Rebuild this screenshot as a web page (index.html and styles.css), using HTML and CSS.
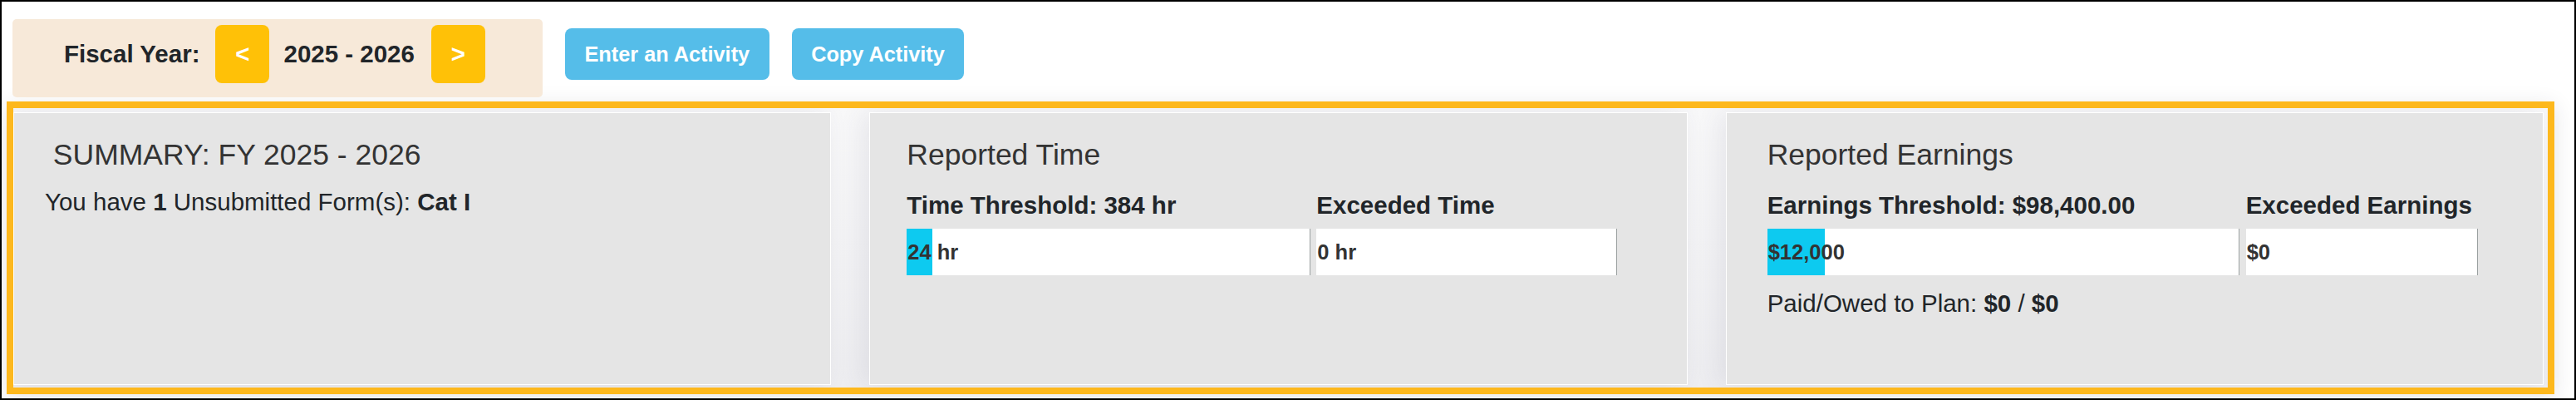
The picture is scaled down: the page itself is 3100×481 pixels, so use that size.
FILE: index.html
```html
<!DOCTYPE html>
<html lang="en">
<head>
<meta charset="utf-8">
<title>Activity Summary</title>
<link rel="stylesheet" href="styles.css">
</head>
<body>
<div class="frame">
  <div class="toolbar">
    <div class="fy">
      <span class="fy-label">Fiscal Year:</span>
      <button class="btn-nav" type="button">&lt;</button>
      <span class="fy-value">2025 - 2026</span>
      <button class="btn-nav" type="button">&gt;</button>
    </div>
    <button class="btn-info" type="button">Enter an Activity</button>
    <button class="btn-info" type="button">Copy Activity</button>
  </div>
  <div class="board">
    <div class="card card-summary">
      <h5 class="card-title">&nbsp;SUMMARY: FY 2025 - 2026</h5>
      <p class="body-text">You have <b>1</b> Unsubmitted Form(s): <b>Cat I</b></p>
    </div>
    <div class="card card-time">
      <h5 class="card-title">Reported Time</h5>
      <div class="metrics metrics-time">
        <div class="metric-head">Time Threshold: 384 hr</div>
        <div class="metric-head">Exceeded Time</div>
        <div class="bar"><div class="fill" style="width: 6.25%">24 hr</div></div>
        <div class="bar"><span class="bar-text">0 hr</span></div>
      </div>
    </div>
    <div class="card card-earn">
      <h5 class="card-title">Reported Earnings</h5>
      <div class="metrics metrics-earn">
        <div class="metric-head">Earnings Threshold: $98,400.00</div>
        <div class="metric-head">Exceeded Earnings</div>
        <div class="bar"><div class="fill" style="width: 12.2%">$12,000</div></div>
        <div class="bar"><span class="bar-text">$0</span></div>
      </div>
      <p class="body-text paid">Paid/Owed to Plan: <b>$0</b> / <b>$0</b></p>
    </div>
  </div>
</div>
</body>
</html>
```

FILE: styles.css
```css
html, body {
  margin: 0;
  padding: 0;
  background: #fff;
}

body {
  font-family: "Liberation Sans", Arial, sans-serif;
  color: #212529;
}

.frame {
  width: 3100px;
  height: 481px;
  box-sizing: border-box;
  border: 2px solid #000;
  background: #fff;
  overflow: hidden;
}

/* ---------- toolbar ---------- */
.toolbar {
  display: flex;
  align-items: flex-start;
  gap: 27px;
  margin: 21px 0 0 13px;
}

.fy {
  display: flex;
  align-items: center;
  box-sizing: border-box;
  height: 94px;
  padding: 7px 69px 17px 62px;
  background: #f7e9d9;
  border-radius: 5px;
  font-size: 29.5px;
  font-weight: 700;
  color: #212529;
}

.fy-label {
  margin-right: 19px;
}

.fy-value {
  margin: 0 20px 0 17px;
}

.btn-nav {
  width: 65px;
  height: 70px;
  padding: 0;
  border: none;
  border-radius: 8px;
  background: #ffc107;
  color: #fff;
  font-family: "Liberation Sans", Arial, sans-serif;
  font-size: 29.5px;
  font-weight: 700;
}

.btn-info {
  margin-top: 11px;
  height: 62px;
  padding: 0 23.5px;
  border: none;
  border-radius: 8px;
  background: #55bde9;
  color: #fff;
  font-family: "Liberation Sans", Arial, sans-serif;
  font-size: 25.3px;
  font-weight: 700;
  white-space: nowrap;
}

/* ---------- summary board ---------- */
.board {
  display: grid;
  grid-template-columns: repeat(3, minmax(0, 1fr));
  column-gap: 46px;
  box-sizing: border-box;
  height: 352px;
  margin: 5px 24px 0 6px;
  padding: 5px 5px 3px 0;
  border: 8px solid #fdb81d;
  background: linear-gradient(to bottom, #f8f8f9, #ededf0);
  box-shadow: 0 5px 24px rgba(40, 40, 60, 0.12);
  overflow: hidden;
}

.card {
  min-width: 0;
  box-sizing: border-box;
  padding-top: 29px;
  background: #e5e5e5;
  border: 1px solid #fff;
  box-shadow: -8px 0 28px rgba(70, 70, 100, 0.09);
}

.card-summary { padding-left: 37px; }
.card-time { padding-left: 44px; }
.card-earn { padding-left: 49px; }

.card-title {
  margin: 0 0 17.4px;
  font-size: 35.5px;
  line-height: 1.2;
  font-weight: 400;
  color: #333;
  white-space: nowrap;
}

.card-summary .card-title {
  margin-bottom: 13.8px;
}

.body-text {
  margin: 0;
  font-size: 29.5px;
  line-height: 1.5;
  color: #212529;
  white-space: nowrap;
}

.paid {
  margin-top: 12.4px;
}

.metrics {
  display: grid;
  column-gap: 7px;
  row-gap: 5.4px;
}

.metrics-time {
  grid-template-columns: 486px 362px;
}

.metrics-earn {
  grid-template-columns: 568px 279px;
  column-gap: 8px;
}

.metric-head {
  font-size: 29.5px;
  font-weight: 700;
  line-height: 1.5;
  white-space: nowrap;
  color: #212529;
}

.bar {
  display: flex;
  box-sizing: border-box;
  height: 56px;
  background: #fff;
  border-right: 1px solid #9aa0a0;
  font-size: 25.5px;
  font-weight: 700;
  line-height: 56px;
  color: #333;
}

.fill {
  flex: 0 0 auto;
  min-width: 0;
  box-sizing: border-box;
  padding-left: 1px;
  background: #0dcaf0;
  white-space: nowrap;
  overflow: visible;
}

.bar-text {
  padding-left: 1px;
  white-space: nowrap;
}
```
